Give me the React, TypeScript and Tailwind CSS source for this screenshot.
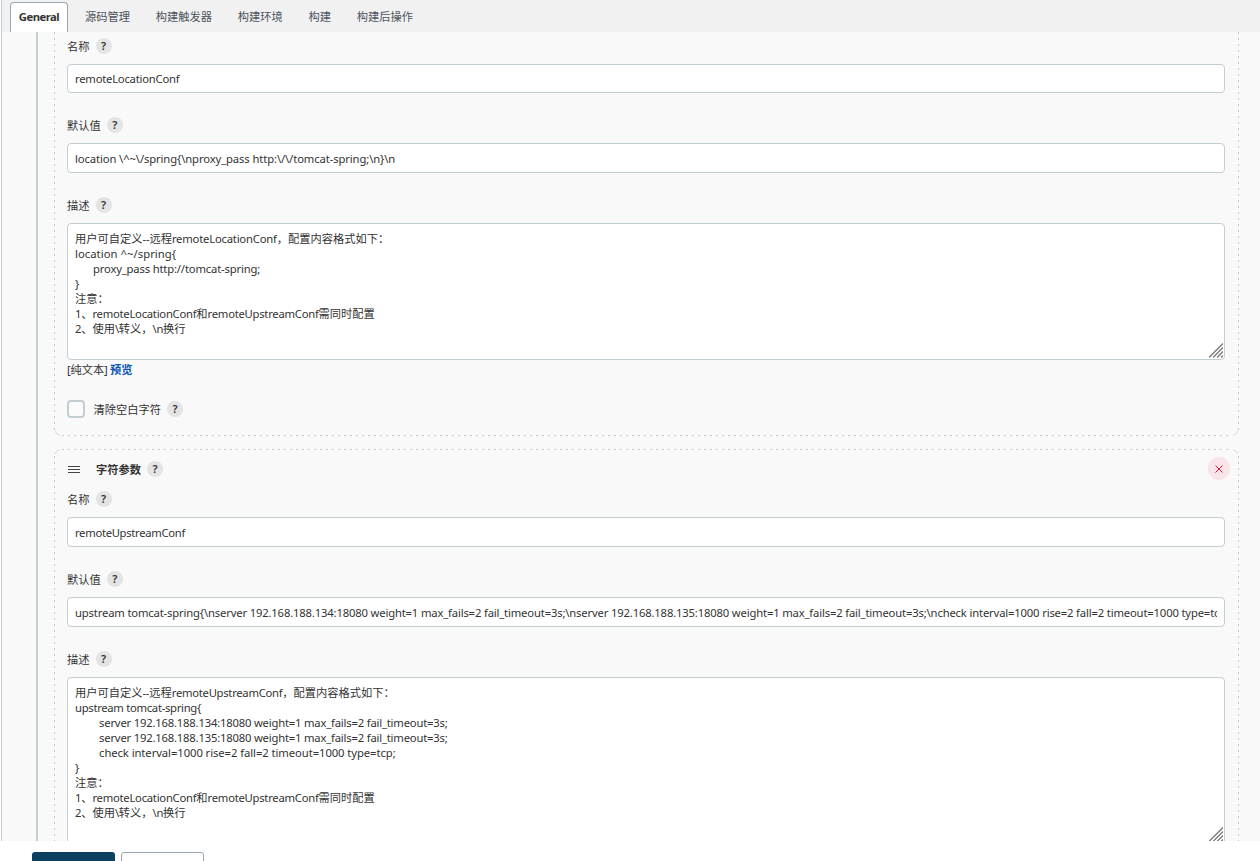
import type { ReactNode } from 'react'

interface Line {
  text: string
  tracking?: string
}

const TABS = ['源码管理', '构建触发器', '构建环境', '构建', '构建后操作']

const NOTES: Line[] = [
  { text: '注意：' },
  { text: '1、remoteLocationConf和remoteUpstreamConf需同时配置', tracking: 'tracking-[-0.25px]' },
  { text: '2、使用\\转义，\\n换行', tracking: 'tracking-[-0.3px]' },
]

const LOCATION_DESC: Line[] = [
  { text: '用户可自定义--远程remoteLocationConf，配置内容格式如下：', tracking: 'tracking-[-0.2px]' },
  { text: 'location ^~/spring{', tracking: 'tracking-[0.05px]' },
  { text: '      proxy_pass http://tomcat-spring;', tracking: 'tracking-[-0.17px]' },
  { text: '}' },
  ...NOTES,
]

const UPSTREAM_DESC: Line[] = [
  { text: '用户可自定义--远程remoteUpstreamConf，配置内容格式如下：', tracking: 'tracking-[-0.27px]' },
  { text: 'upstream tomcat-spring{', tracking: 'tracking-[-0.29px]' },
  { text: '        server 192.168.188.134:18080 weight=1 max_fails=2 fail_timeout=3s;', tracking: 'tracking-[-0.19px]' },
  { text: '        server 192.168.188.135:18080 weight=1 max_fails=2 fail_timeout=3s;', tracking: 'tracking-[-0.19px]' },
  { text: '        check interval=1000 rise=2 fall=2 timeout=1000 type=tcp;', tracking: 'tracking-[-0.07px]' },
  { text: '}' },
  ...NOTES,
]

const UPSTREAM_VALUE =
  'upstream tomcat-spring{\\nserver 192.168.188.134:18080 weight=1 max_fails=2 fail_timeout=3s;\\nserver 192.168.188.135:18080 weight=1 max_fails=2 fail_timeout=3s;\\ncheck interval=1000 rise=2 fall=2 timeout=1000 type=tcp;\\n}\\n'

function Help() {
  return (
    <button className="flex size-4 shrink-0 items-center justify-center rounded-full bg-[#e4e4e4] pb-[2px] text-[11px] leading-none font-semibold text-[#333]">
      ?
    </button>
  )
}

function Label({ children, className = '' }: { children: ReactNode; className?: string }) {
  return (
    <div className={`flex h-4 items-center gap-1.5 ${className}`}>
      <span className="pt-0.5">{children}</span>
      <Help />
    </div>
  )
}

function TextInput({ value, className }: { value: string; className: string }) {
  return (
    <input
      readOnly
      value={value}
      className={`mt-2.5 block w-full rounded-[4px] border border-[#c3cdd4] bg-white px-[7px] outline-none ${className}`}
    />
  )
}

function TextArea({ lines, className }: { lines: Line[]; className: string }) {
  return (
    <div
      className={`relative mt-2.5 rounded-[4px] border border-[#c3cdd4] bg-white px-[7px] pt-[7px] leading-[15px] whitespace-pre ${className}`}
    >
      {lines.map((line, i) => (
        <div key={i} className="h-[15px]">
          {/* only latin runs are tightened, indents and CJK keep their advance */}
          {line.text.split(/([\u3000-\uffff]+|^ +)/).map((run, j) => (
            <span key={j} className={j % 2 ? (run[0] === ' ' ? 'tracking-[0.08px]' : 'tracking-normal') : line.tracking}>
              {run}
            </span>
          ))}
        </div>
      ))}
      <svg
        className="absolute right-px bottom-px"
        width="14"
        height="15"
        viewBox="0 0 14 15"
        fill="none"
        stroke="#777"
        strokeWidth="1.3"
      >
        <path d="M0 14.5 14 .5M4 14.5l10-10M8 14.5l6-6M12 14.5l2-2" />
      </svg>
    </div>
  )
}

// 2px dashes with 4px gaps, which border-dashed cannot give
function DashedFrame({ children }: { children: ReactNode }) {
  return (
    <svg
      className="pointer-events-none absolute inset-0"
      width="1185"
      height="404"
      overflow="visible"
      fill="none"
      stroke="#c3c9c9"
      strokeDasharray="2 4"
    >
      {children}
    </svg>
  )
}

export default function App() {
  return (
    <div className="flex h-[861px] w-[1260px] flex-col overflow-hidden bg-white font-['Noto_Sans','Noto_Sans_CJK_SC',sans-serif] text-[11.25px] leading-4 text-[#333]">
      <div className="ml-px flex h-[841px] flex-col border-l border-[#c3cdd4] bg-[#f9f9f9]">
        <nav className="flex h-8 shrink-0 items-end bg-[#f1f1f1] pl-2 text-[#4d545d]">
          <div className="mr-1 flex h-[30px] w-[58px] items-center justify-center rounded-t-[4px] border border-b-0 border-[#98a6b0] bg-white pb-[2px] font-bold tracking-[-0.5px] text-[#333]">
            General
          </div>
          {TABS.map((tab) => (
            <div key={tab} className="flex h-[30px] items-center px-[12.9px]">
              {tab}
            </div>
          ))}
        </nav>

        <main className="ml-[34px] min-h-0 flex-1 overflow-hidden border-l-2 border-[#c3cdd4] pr-[21px] pl-4">
          <section className="relative h-[404px] pt-1.5 pr-[14px] pl-[13px]">
            <DashedFrame>
              <path d="M.5 0V398M1184.5 0V398" />
              <path d="M8 403.5H1178" />
              <path d="M1 399q.6 3 5 4.4M1184 399q-.6 3-5 4.4" strokeDasharray="none" strokeOpacity=".6" />
            </DashedFrame>
            <Label>名称</Label>
            <TextInput value="remoteLocationConf" className="h-[29px] pb-px tracking-[-0.22px]" />
            <Label className="mt-6">默认值</Label>
            <TextInput
              value={'location \\^~\\/spring{\\nproxy_pass http:\\/\\/tomcat-spring;\\n}\\n'}
              className="h-[30px] pt-px tracking-[-0.11px]"
            />
            <Label className="mt-6">描述</Label>
            <TextArea lines={LOCATION_DESC} className="h-[137px]" />
            <div className="mt-[1.5px]">
              <span className="mr-[-0.5px] tracking-[-0.1px]">[纯文本]</span>{' '}
              <a className="font-bold text-[#0b55b5]">预览</a>
            </div>
            <div className="mt-[22.5px] flex h-[18px] items-center">
              <span className="size-[18px] rounded-[4px] border-2 border-[#c3cdd4] bg-[#fbfbfb]" />
              <span className="mr-1.5 ml-[8.5px] pt-px">清除空白字符</span>
              <Help />
            </div>
          </section>

          <section className="relative mt-[13px] h-[420px] pt-px pr-[14px] pl-[13px]">
            <DashedFrame>
              <path d="M.5 7V420M1184.5 7V420" />
              <path d="M8 .5H1178" />
              <path d="M1 5q.6-3 5-4.4M1184 5q-.6-3-5-4.4" strokeDasharray="none" strokeOpacity=".6" />
            </DashedFrame>
            <div className="flex h-[30px] items-start pt-[7px]">
              <svg className="mt-[8px] ml-px" width="12" height="9" fill="none" stroke="#444">
                <path d="M0 1.5h12M0 4.5h12M0 7.5h12" />
              </svg>
              <div className="mt-1 ml-[16px] flex h-4 items-center gap-1.5 font-bold">
                <span className="pt-0.5">字符参数</span>
                <Help />
              </div>
              <button className="mr-[-5px] ml-auto flex h-[23px] w-[22px] items-center justify-center rounded-full bg-[#f7e5e9]">
                <svg width="8" height="8" stroke="#dc1437">
                  <path d="M.5.5l7 7M7.5.5l-7 7" />
                </svg>
              </button>
            </div>
            <Label className="mt-[11px]">名称</Label>
            <TextInput value="remoteUpstreamConf" className="h-[30px] pt-px tracking-[-0.3px]" />
            <Label className="mt-6">默认值</Label>
            <TextInput value={UPSTREAM_VALUE} className="h-[30px] pt-px tracking-[-0.16px]" />
            <Label className="mt-6">描述</Label>
            <TextArea lines={UPSTREAM_DESC} className="h-[167px]" />
          </section>
        </main>
      </div>

      <footer className="flex h-5 shrink-0 gap-1.5 pt-[11px] pl-8">
        <button className="h-[30px] w-[83px] shrink-0 rounded-[3px] bg-[#0b4061]" />
        <button className="h-[30px] w-[83px] shrink-0 rounded-[3px] border border-[#98a6b0] bg-white" />
      </footer>
    </div>
  )
}
